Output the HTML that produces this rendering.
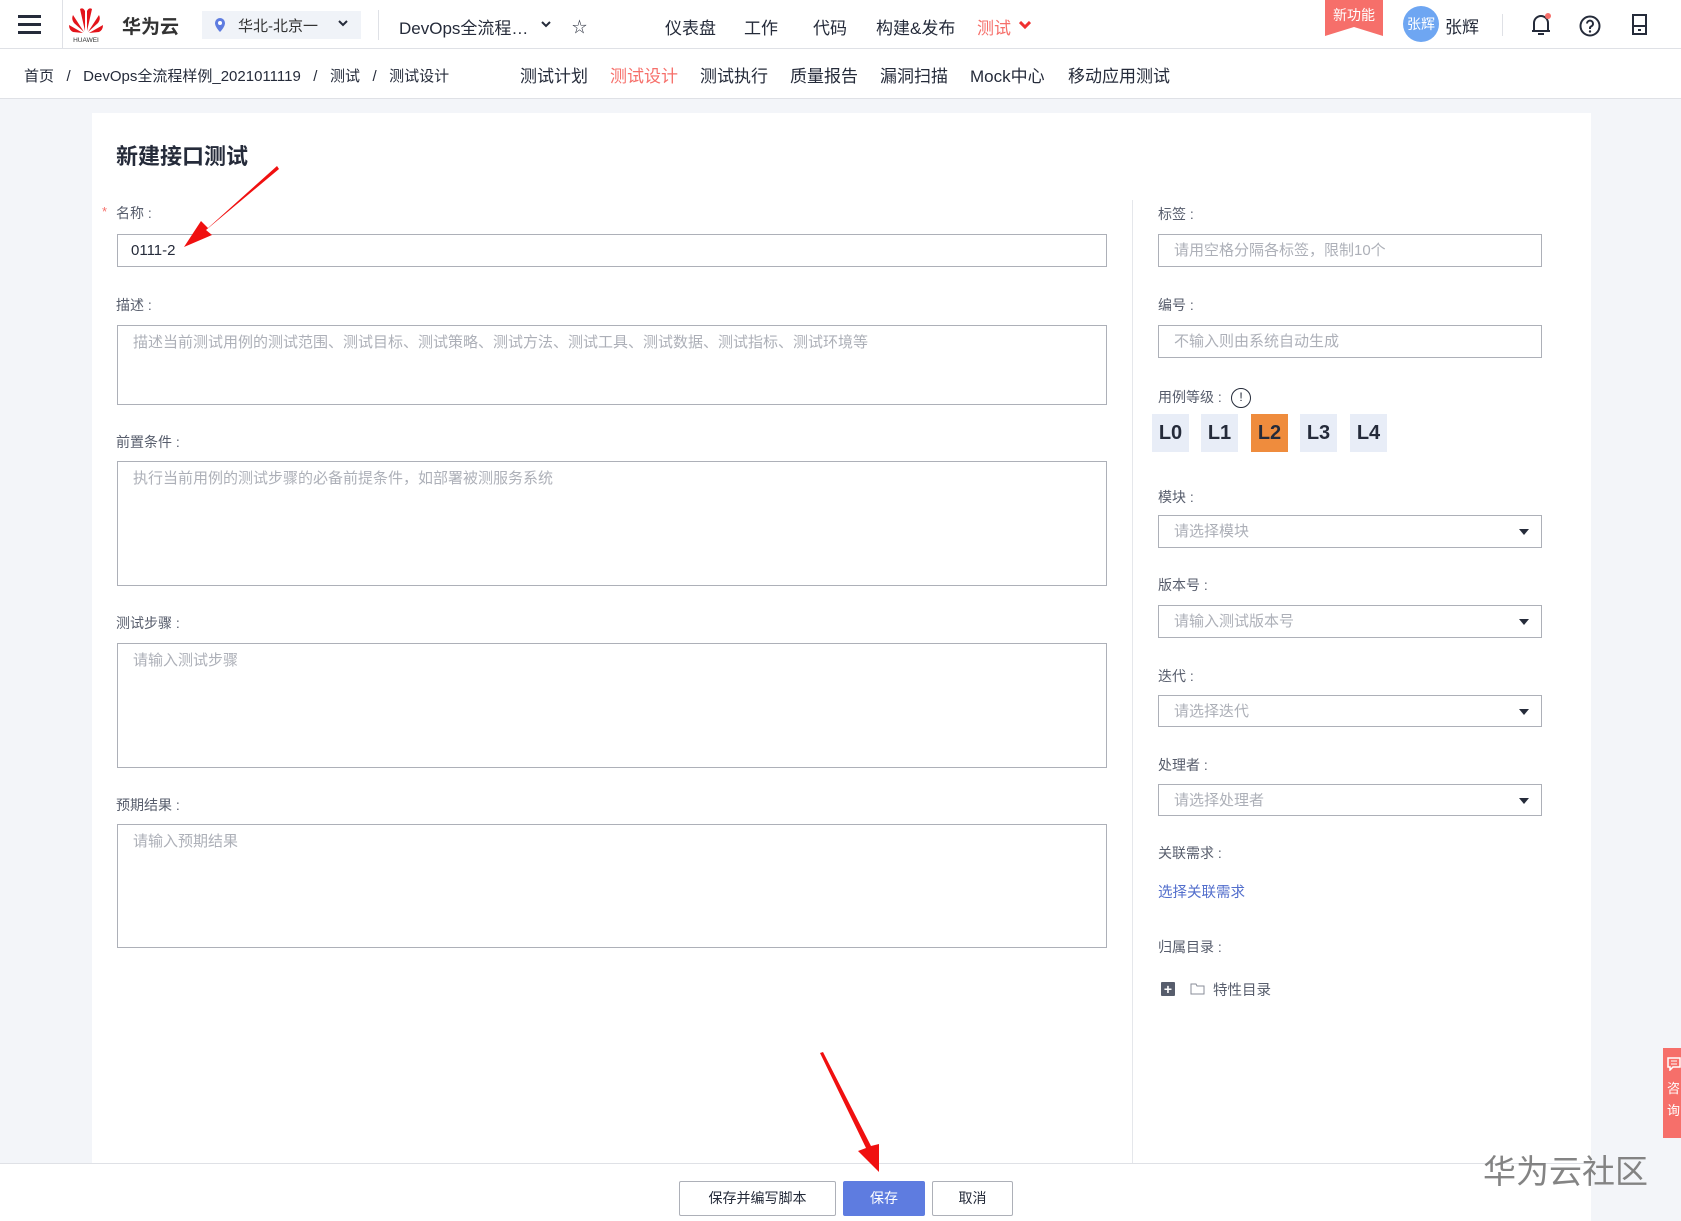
<!DOCTYPE html>
<html><head><meta charset="utf-8"><style>
*{margin:0;padding:0;box-sizing:border-box}
body{width:1681px;height:1221px;position:relative;overflow:hidden;background:#f3f5f9;font-family:"Liberation Sans","Noto Sans CJK SC",sans-serif;color:#252b3a}
.a{position:absolute;white-space:nowrap}
.lbl{position:absolute;font-size:14px;color:#575d6c;line-height:20px}
.inp{position:absolute;border:1px solid #adb0b8;background:#fff;font-size:15px;color:#adb0b8;padding:0 15px;line-height:32px}
.ta{line-height:20px;padding-top:7px}
.sel:after{content:"";position:absolute;right:12px;top:13px;border:5px solid transparent;border-top:6px solid #252b3a;border-bottom:0}
.lv{position:absolute;top:414px;width:37px;height:38px;background:#e8edf7;font-size:20px;font-weight:bold;text-align:center;line-height:38px;color:#252b3a}
.nav{position:absolute;top:14px;font-size:17px;color:#252b3a}
.tab{position:absolute;top:62px;font-size:17px;color:#252b3a}
.btn{position:absolute;top:1181px;height:35px;border:1px solid #adb0b8;background:#fff;font-size:14px;text-align:center;line-height:33px;color:#252b3a;border-radius:2px}
</style></head><body>
<div class="a" style="left:0;top:0;width:1681px;height:49px;background:#fff;border-bottom:1px solid #dfe1e6"></div>
<div class="a" style="left:18px;top:15px;width:23px;height:3px;background:#252b3a;box-shadow:0 8px 0 #252b3a,0 16px 0 #252b3a"></div>
<div class="a" style="left:62px;top:0;width:1px;height:49px;background:#dfe1e6"></div>
<svg class="a" style="left:68px;top:5px" width="36" height="38" viewBox="0 0 36 38"><g fill="#e3141b"><path d="M17 26 L12 4 Q15 2 17 6Z"/><path d="M19 26 L24 4 Q21 2 19 6Z"/><path d="M16 27 L5 10 Q3 14 6 18Z"/><path d="M20 27 L31 10 Q33 14 30 18Z"/><path d="M15 28 L1 20 Q1 25 5 27Z"/><path d="M21 28 L35 20 Q35 25 31 27Z"/></g><text x="18" y="37" font-size="6.5" text-anchor="middle" fill="#333" font-family="Liberation Sans">HUAWEI</text></svg>
<div class="a" style="left:122px;top:12px;font-size:19px;font-weight:bold;color:#333">华为云</div>
<div class="a" style="left:202px;top:11px;width:159px;height:28px;background:#f0f3f8"></div>
<svg class="a" style="left:214px;top:17px" width="12" height="16"><path d="M6 1a5 5 0 0 1 5 5c0 4-5 9-5 9s-5-5-5-9a5 5 0 0 1 5-5z" fill="#5e7ce0"/><circle cx="6" cy="6" r="2" fill="#fff"/></svg>
<div class="a" style="left:238px;top:15px;font-size:15px;color:#333">华北-北京一</div>
<svg class="a" style="left:338px;top:20px" width="10" height="8"><path d="M1 1l4 4 4-4" fill="none" stroke="#252b3a" stroke-width="2"/></svg>
<div class="a" style="left:378px;top:10px;width:1px;height:30px;background:#dfe1e6"></div>
<div class="nav" style="left:399px">DevOps全流程…</div>
<svg class="a" style="left:541px;top:21px" width="10" height="8"><path d="M1 1l4 4 4-4" fill="none" stroke="#252b3a" stroke-width="2"/></svg>
<div class="a" style="left:572px;top:16px;font-size:15px">☆</div>
<div class="nav" style="left:665px">仪表盘</div>
<div class="nav" style="left:744px">工作</div>
<div class="nav" style="left:813px">代码</div>
<div class="nav" style="left:876px">构建&amp;发布</div>
<div class="nav" style="left:977px;color:#f66f6a">测试</div>
<svg class="a" style="left:1019px;top:21px" width="12" height="9"><path d="M1 1l5 5 5-5" fill="none" stroke="#f03030" stroke-width="3"/></svg>
<svg class="a" style="left:1325px;top:0" width="58" height="36"><path d="M0 0H58V36L29 27L0 36Z" fill="#f66f6a"/><text x="29" y="20" font-size="14" fill="#fff" text-anchor="middle" font-family="Noto Sans CJK SC">新功能</text></svg>
<div class="a" style="left:1403px;top:6px;width:36px;height:36px;border-radius:50%;background:#6ea6f2;color:#fff;font-size:14px;text-align:center;line-height:36px">张辉</div>
<div class="a" style="left:1445px;top:13px;font-size:17px">张辉</div>
<div class="a" style="left:1502px;top:14px;width:1px;height:22px;background:#dfe1e6"></div>
<svg class="a" style="left:1529px;top:12px" width="24" height="26"><path d="M5 19V11a7 7 0 0 1 14 0v8H3h18" fill="none" stroke="#252b3a" stroke-width="2"/><path d="M9 22h6" stroke="#252b3a" stroke-width="2"/><circle cx="19" cy="4" r="3" fill="#f66f6a"/></svg>
<svg class="a" style="left:1578px;top:14px" width="24" height="24"><circle cx="12" cy="12" r="9.5" fill="none" stroke="#252b3a" stroke-width="2"/><path d="M9 9.5a3 3 0 1 1 4 3c-1 .5-1 1-1 2.5" fill="none" stroke="#252b3a" stroke-width="2"/><circle cx="12" cy="17.5" r="1.2" fill="#252b3a"/></svg>
<svg class="a" style="left:1631px;top:14px" width="18" height="22"><rect x="2" y="1" width="13" height="19" fill="none" stroke="#252b3a" stroke-width="2"/><path d="M2 12h13M7 16h3" stroke="#252b3a" stroke-width="2"/></svg>
<div class="a" style="left:0;top:49px;width:1681px;height:50px;background:#fff;border-bottom:1px solid #dfe1e6"></div>
<div class="a" style="left:24px;top:65px;font-size:15px;color:#252b3a;word-spacing:0">首页 &nbsp;&nbsp;/ &nbsp;&nbsp;DevOps全流程样例_2021011119 &nbsp;&nbsp;/ &nbsp;&nbsp;测试 &nbsp;&nbsp;/ &nbsp;&nbsp;测试设计</div>
<div class="tab" style="left:520px">测试计划</div>
<div class="tab" style="left:610px;color:#f66f6a">测试设计</div>
<div class="tab" style="left:700px">测试执行</div>
<div class="tab" style="left:790px">质量报告</div>
<div class="tab" style="left:880px">漏洞扫描</div>
<div class="tab" style="left:970px">Mock中心</div>
<div class="tab" style="left:1068px">移动应用测试</div>
<div class="a" style="left:92px;top:113px;width:1499px;height:1050px;background:#fff"></div>
<div class="a" style="left:116px;top:139px;font-size:22px;font-weight:bold">新建接口测试</div>
<div class="a" style="left:1132px;top:200px;width:1px;height:963px;background:#e5e7eb"></div>
<div class="a" style="left:102px;top:204px;color:#f66f6a;font-size:13px">*</div>
<div class="lbl" style="left:116px;top:203px">名称 :</div>
<div class="inp" style="left:117px;top:234px;width:990px;height:33px;color:#252b3a;padding-left:13px">0111-2</div>
<div class="lbl" style="left:116px;top:295px">描述 :</div>
<div class="inp ta" style="left:117px;top:325px;width:990px;height:80px">描述当前测试用例的测试范围、测试目标、测试策略、测试方法、测试工具、测试数据、测试指标、测试环境等</div>
<div class="lbl" style="left:116px;top:432px">前置条件 :</div>
<div class="inp ta" style="left:117px;top:461px;width:990px;height:125px">执行当前用例的测试步骤的必备前提条件，如部署被测服务系统</div>
<div class="lbl" style="left:116px;top:613px">测试步骤 :</div>
<div class="inp ta" style="left:117px;top:643px;width:990px;height:125px">请输入测试步骤</div>
<div class="lbl" style="left:116px;top:795px">预期结果 :</div>
<div class="inp ta" style="left:117px;top:824px;width:990px;height:124px">请输入预期结果</div>
<div class="lbl" style="left:1158px;top:204px">标签 :</div>
<div class="inp" style="left:1158px;top:234px;width:384px;height:33px">请用空格分隔各标签，限制10个</div>
<div class="lbl" style="left:1158px;top:295px">编号 :</div>
<div class="inp" style="left:1158px;top:325px;width:384px;height:33px">不输入则由系统自动生成</div>
<div class="lbl" style="left:1158px;top:387px">用例等级 :</div>
<div class="a" style="left:1231px;top:388px;width:20px;height:20px;border:1.5px solid #252b3a;border-radius:50%;font-size:12px;text-align:center;line-height:17px">!</div>
<div class="lv" style="left:1152px">L0</div>
<div class="lv" style="left:1201px">L1</div>
<div class="lv" style="left:1251px;background:#ef8c3d">L2</div>
<div class="lv" style="left:1300px">L3</div>
<div class="lv" style="left:1350px">L4</div>
<div class="lbl" style="left:1158px;top:487px">模块 :</div>
<div class="inp sel" style="left:1158px;top:515px;width:384px;height:33px">请选择模块</div>
<div class="lbl" style="left:1158px;top:575px">版本号 :</div>
<div class="inp sel" style="left:1158px;top:605px;width:384px;height:33px">请输入测试版本号</div>
<div class="lbl" style="left:1158px;top:666px">迭代 :</div>
<div class="inp sel" style="left:1158px;top:695px;width:384px;height:32px">请选择迭代</div>
<div class="lbl" style="left:1158px;top:755px">处理者 :</div>
<div class="inp sel" style="left:1158px;top:784px;width:384px;height:32px">请选择处理者</div>
<div class="lbl" style="left:1158px;top:843px">关联需求 :</div>
<div class="a" style="left:1158px;top:881px;font-size:14.5px;color:#526ecc">选择关联需求</div>
<div class="lbl" style="left:1158px;top:937px">归属目录 :</div>
<div class="a" style="left:1161px;top:982px;width:14px;height:14px;background:#575d6c;border-radius:1px;color:#fff;font-size:14px;font-weight:bold;text-align:center;line-height:14px">+</div>
<svg class="a" style="left:1190px;top:983px" width="15" height="12"><path d="M1 1h5l1 2h7v8H1z" fill="none" stroke="#8a8e99"/></svg>
<div class="a" style="left:1213px;top:979px;font-size:14.5px;color:#575d6c">特性目录</div>
<div class="a" style="left:0;top:1163px;width:1591px;height:58px;background:#fff;border-top:1px solid #dfe1e6"></div>
<div class="btn" style="left:679px;width:157px">保存并编写脚本</div>
<div class="btn" style="left:843px;width:82px;background:#5e7ce0;border-color:#5e7ce0;color:#fff">保存</div>
<div class="btn" style="left:932px;width:81px">取消</div>
<div class="a" style="left:1483px;top:1145px;font-size:33px;color:rgba(110,110,110,.85)">华为云社区</div>
<div class="a" style="left:1663px;top:1048px;width:20px;height:90px;background:#f66f6a;color:#fff;font-size:13px;line-height:22px;padding:8px 0 0 4px;white-space:normal"><svg width="14" height="14"><path d="M1 1h12v9H6l-3 3v-3H1z" fill="none" stroke="#fff" stroke-width="1.5"/><path d="M4 4h6M4 7h6" stroke="#fff"/></svg><br>咨询</div>
<svg class="a" style="left:0;top:0" width="1681" height="1221"><g fill="#f01010"><path d="M277 166 L208 228 L201 221 L184 247 L212 235 L206 230 L279 169Z"/><path d="M820 1053 L866 1148 L858 1151 L879 1172 L879 1144 L871 1146 L823 1052Z"/></g></svg>
</body></html>
